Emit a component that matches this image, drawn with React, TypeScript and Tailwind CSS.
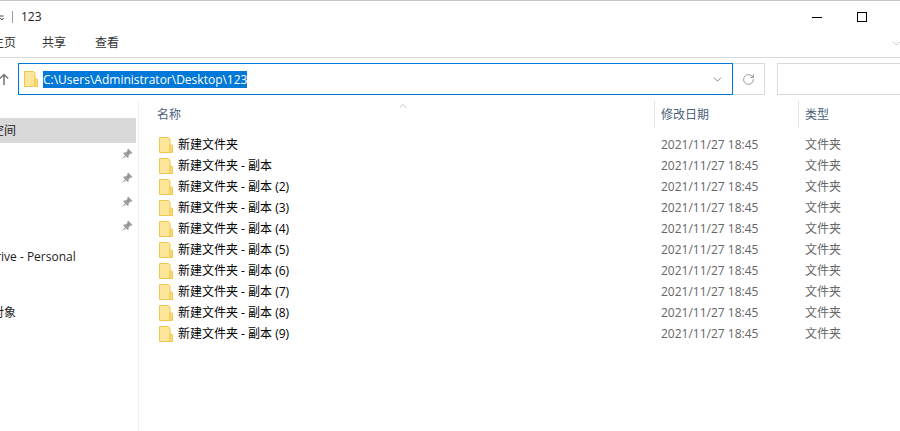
import { ChevronDown, ChevronUp, RotateCw } from 'lucide-react';

const folders = [
  '新建文件夹',
  '新建文件夹 - 副本',
  '新建文件夹 - 副本 (2)',
  '新建文件夹 - 副本 (3)',
  '新建文件夹 - 副本 (4)',
  '新建文件夹 - 副本 (5)',
  '新建文件夹 - 副本 (6)',
  '新建文件夹 - 副本 (7)',
  '新建文件夹 - 副本 (8)',
  '新建文件夹 - 副本 (9)',
];

function FolderIcon({ small }: { small?: boolean }) {
  return (
    <svg width="14" height="16" viewBox="0 0 14 16" className={small ? 'shrink-0' : 'shrink-0'}>
      <path d="M0.5 0.5H9.5L11 2V15.5H0.5Z" fill="#fde69a" stroke="#eec84f" />
      <path d="M11 8V15.5H13.5V8.5L12.5 8Z" fill="#fbdc7c" stroke="#eec84f" />
    </svg>
  );
}

function Pin() {
  return (
    <svg width="12" height="12" viewBox="0 0 12 12">
      <path d="M7 0.5L11.5 5L10.5 5.8L9.5 5.4L7.5 7.4L7.6 9.5L6.6 10L2.2 5.6L2.7 4.5L4.8 4.6L6.8 2.6L6.3 1.4Z" fill="#9a9a9a" />
      <path d="M3.8 7.4L0.5 11.5L4.8 8.4Z" fill="#9a9a9a" />
    </svg>
  );
}

export default function App() {
  return (
    <div className="w-[900px] h-[431px] overflow-hidden bg-white flex flex-col text-[12px] font-['Open_Sans','Noto_Sans_CJK_SC',sans-serif]">
      <div className="h-[33px] shrink-0 border-t border-[#c8c8c8] flex items-center">
        <svg width="4" height="6" viewBox="0 0 4 6" className="mt-[2px]">
          <path d="M0 1H3.5M0 3L2 5L3.5 3" fill="none" stroke="#444" />
        </svg>
        <div className="w-px h-[12px] bg-[#a0a0a0] ml-[8px]" />
        <span className="ml-[8px] text-[#222]">123</span>
        <div className="ml-auto w-[10px] h-px bg-black" />
        <div className="ml-[35px] mr-[33px] w-[10px] h-[10px] border border-black" />
      </div>

      <div className="h-[25px] shrink-0 border-b border-[#dadada] flex items-center pb-[4px] text-[#333] relative">
        <span className="-ml-[8px]">主页</span>
        <span className="ml-[26px]">共享</span>
        <span className="ml-[29px]">查看</span>
        <ChevronDown size={13} strokeWidth={1} className="ml-auto -mr-[3px] text-[#999]" />
      </div>

      <div className="h-[32px] mt-[5px] shrink-0 flex items-stretch">
        <div className="w-[18px] flex items-center">
          <svg width="10" height="12" viewBox="0 0 10 12" className="-ml-[1px]">
            <path d="M5 12V1.5M0.8 5.5L5 1.5L9.2 5.5" fill="none" stroke="#7a7a7a" strokeWidth="1.6" />
          </svg>
        </div>
        <div className="w-[715px] border border-[#0078d7] flex items-center pl-[5px] pr-[8px]">
          <FolderIcon small />
          <span className="ml-[5px] bg-[#0078d7] text-white leading-[17px]">C:\Users\Administrator\Desktop\123</span>
          <ChevronDown size={13} strokeWidth={1.2} className="ml-auto text-[#444]" />
        </div>
        <div className="w-[32px] border border-l-0 border-[#d9d9d9] flex items-center justify-center">
          <RotateCw size={13} strokeWidth={1.6} className="text-[#8a8a8a]" />
        </div>
        <div className="flex-1 ml-[12px] border border-r-0 border-[#d9d9d9]" />
      </div>

      <div className="flex-1 min-h-0 flex mt-[6px]">
        <div className="w-[139px] shrink-0 border-r border-[#f0f0f0] pr-[2px] pt-[17px]">
          <div className="h-[25px] bg-[#d9d9d9] flex items-center">
            <span className="-ml-[8px] text-[#222]">空间</span>
          </div>
          <div className="mt-[-1px] flex flex-col items-end pr-[3px]">
            {[0, 1, 2, 3].map((i) => (
              <div key={i} className="h-[24px] flex items-center">
                <Pin />
              </div>
            ))}
          </div>
          <div className="mt-[7px] h-[24px] flex items-center -ml-[36px] whitespace-nowrap text-[#222]">
            OneDrive - Personal
          </div>
          <div className="mt-[32px] h-[24px] flex items-center -ml-[8px] text-[#222]">对象</div>
        </div>

        <div className="flex-1 min-w-0">
          <div className="h-[27px] flex items-center text-[#4c607a] relative">
            <ChevronUp size={12} strokeWidth={1} className="absolute left-[258px] -top-[1px] text-[#888]" />
            <div className="w-[515px] pl-[18px]">名称</div>
            <div className="w-[144px] h-full border-l border-[#e5e5e5] pl-[6px] flex items-center">修改日期</div>
            <div className="flex-1 h-full border-l border-[#e5e5e5] pl-[6px] flex items-center">类型</div>
          </div>
          <div className="mt-[6px]">
            {folders.map((name) => (
              <div key={name} className="h-[21px] flex items-center">
                <div className="w-[515px] flex items-center pl-[20px]">
                  <FolderIcon />
                  <span className="ml-[5px] text-black">{name}</span>
                </div>
                <div className="w-[144px] pl-[7px] text-[#666]">2021/11/27 18:45</div>
                <div className="flex-1 pl-[7px] text-[#666]">文件夹</div>
              </div>
            ))}
          </div>
        </div>
      </div>
    </div>
  );
}
